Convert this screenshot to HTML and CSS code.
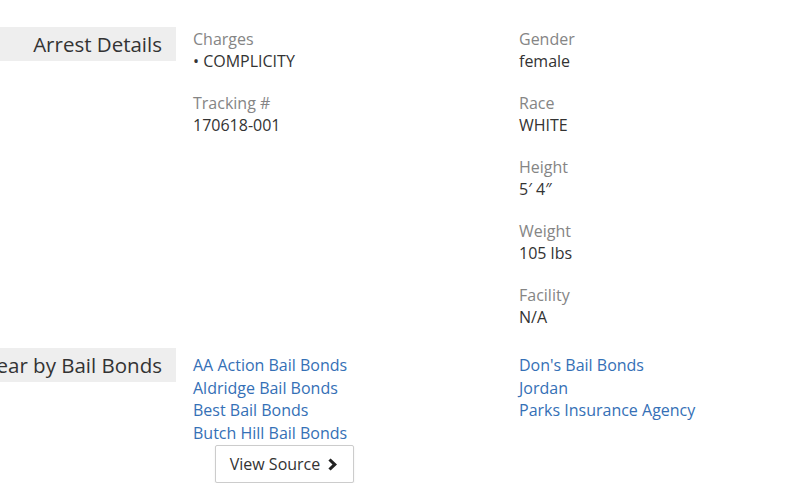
FILE: index.html
```html
<!DOCTYPE html>
<html lang="en">
<head>
  <meta charset="UTF-8" />
  <meta name="viewport" content="width=device-width, initial-scale=1.0" />
  <title>Arrest Record</title>
  <link rel="stylesheet" href="styles.css">
</head>
<body>
  <div class="section details">
    <div class="section-title"><span>Arrest Details</span></div>
    <div class="fields">
      <div class="col">
        <div class="field">
          <div class="field-label">Charges</div>
          <div class="field-value">• COMPLICITY</div>
        </div>
        <div class="field">
          <div class="field-label">Tracking #</div>
          <div class="field-value">170618-001</div>
        </div>
      </div>
      <div class="col">
        <div class="field">
          <div class="field-label">Gender</div>
          <div class="field-value">female</div>
        </div>
        <div class="field">
          <div class="field-label">Race</div>
          <div class="field-value">WHITE</div>
        </div>
        <div class="field">
          <div class="field-label">Height</div>
          <div class="field-value">5′ 4″</div>
        </div>
        <div class="field">
          <div class="field-label">Weight</div>
          <div class="field-value">105 lbs</div>
        </div>
        <div class="field">
          <div class="field-label">Facility</div>
          <div class="field-value">N/A</div>
        </div>
      </div>
    </div>
  </div>

  <div class="section bonds">
    <div class="section-title"><span>Near by Bail Bonds</span></div>
    <div class="fields">
      <div class="col">
        <a href="#">AA Action Bail Bonds</a>
        <a href="#">Aldridge Bail Bonds</a>
        <a href="#">Best Bail Bonds</a>
        <a href="#">Butch Hill Bail Bonds</a>
        <button class="source-btn">View Source
          <svg width="11" height="13" viewBox="0 0 11 13"><path d="M2.6 0.4 L9 6.5 L2.6 12.6 L0.4 10.4 L4.5 6.5 L0.4 2.6 Z" fill="#222"/></svg>
        </button>
      </div>
      <div class="col">
        <a href="#">Don's Bail Bonds</a>
        <a href="#">Jordan</a>
        <a href="#">Parks Insurance Agency</a>
      </div>
    </div>
  </div>
</body>
</html>
```

FILE: styles.css
```css
html, body {
  overflow: hidden;
}
body {
  margin: 0;
  padding-top: 27px;
  font-family: "Open Sans", sans-serif;
  background: white;
  color: #333;
}
.section {
  display: flex;
  gap: 17px;
}
.section-title {
  flex-shrink: 0;
  width: 176px;
  height: 34px;
  box-sizing: border-box;
  padding-right: 14px;
  background: #eee;
  display: flex;
  justify-content: flex-end;
  align-items: center;
  font-size: 20.5px;
  color: #333;
  white-space: nowrap;
  overflow: hidden;
}
.fields {
  display: grid;
  grid-template-columns: 326px 280px;
}
.details .fields {
  padding-top: 1px;
}
.col {
  display: flex;
  flex-direction: column;
  align-items: flex-start;
}
.field {
  font-size: 16px;
  line-height: 22px;
  margin-bottom: 20px;
}
.field-label {
  color: #858585;
}
.field-value {
  color: #333;
}
.bonds .fields {
  padding-top: 6px;
}
.col a {
  font-size: 16px;
  line-height: 22.6px;
  color: #3570b6;
  text-decoration: none;
}
.source-btn {
  margin: 1px 0 0 22px;
  width: 139px;
  height: 38px;
  background: white;
  border: 1px solid #ccc;
  border-radius: 2px;
  box-shadow: 0 1px 2px rgba(0,0,0,0.08);
  font-family: "Open Sans", sans-serif;
  font-size: 16px;
  color: #333;
  display: flex;
  align-items: center;
  justify-content: center;
  gap: 8px;
  cursor: pointer;
}
```
